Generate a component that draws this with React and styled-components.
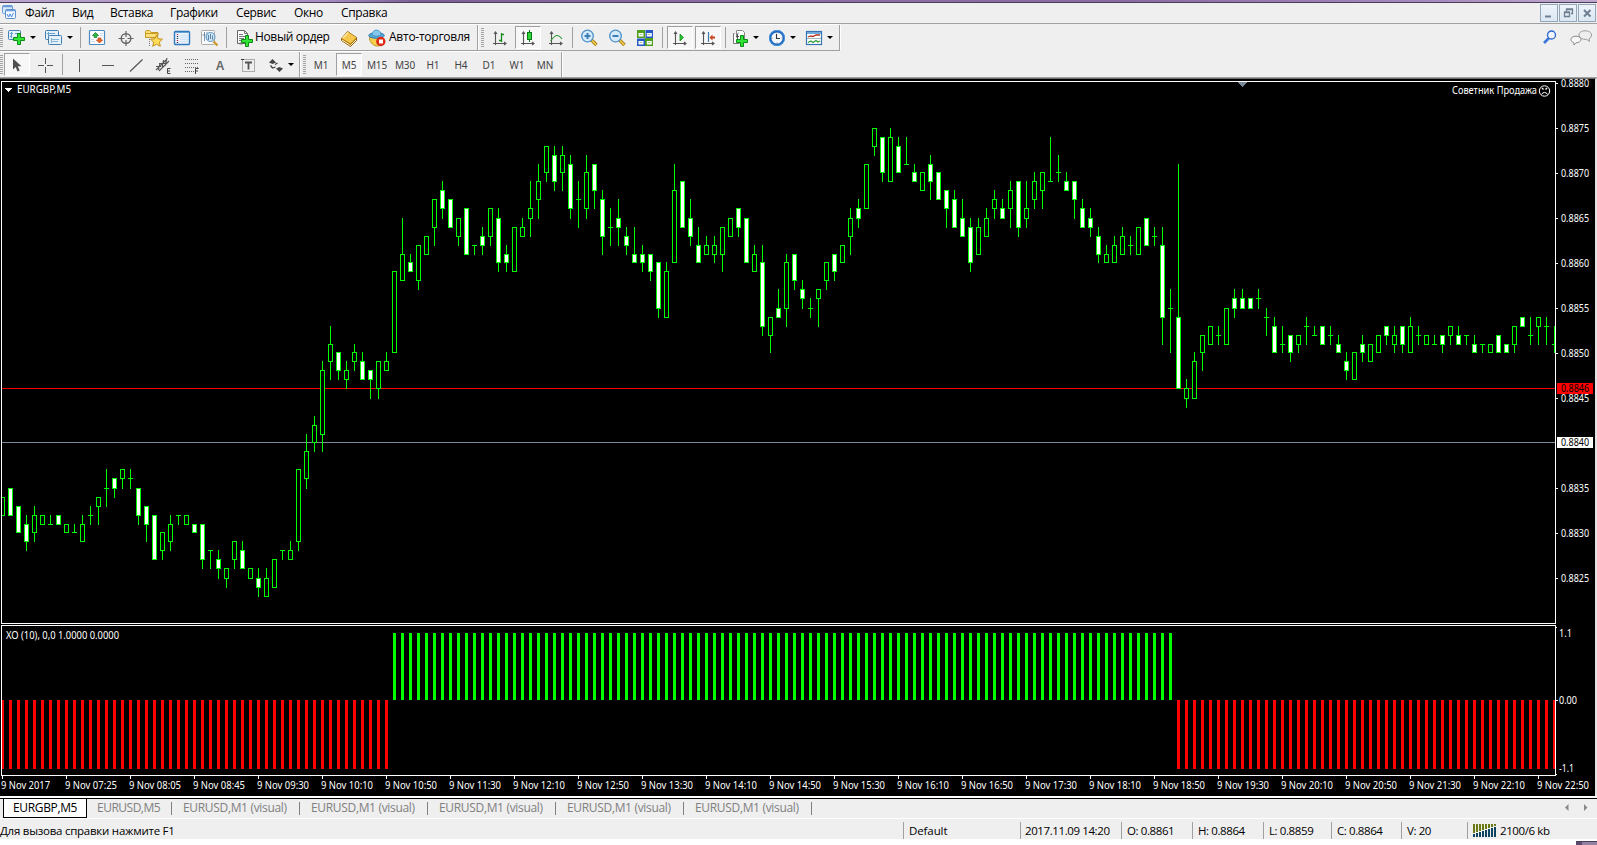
import styled, { createGlobalStyle } from 'styled-components'

const GlobalStyle = createGlobalStyle`
  body {
    margin: 0;
    background: #fff;
    overflow: hidden;
  }
`

const uiFont = "'Open Sans', 'Noto Sans', sans-serif"
const chartFont = "'Noto Sans', 'DejaVu Sans', sans-serif"

const AppStyled = styled.div`
  position: relative;
  width: 1597px;
  height: 845px;
  display: flex;
  flex-direction: column;
  overflow: hidden;
  background: #fff;
  font-family: ${uiFont};
  font-size: 12px;
  color: #000;
`

const TitleStrip = styled.div`
  height: 2px;
  flex: none;
  background: linear-gradient(90deg, #b9a5cc, #a98fc0 20%, #7d6093 26%, #8d6fa5 50%, #8a6ba0 70%, #a78bbd 90%, #c0a9cf);
  border-bottom: 1px solid #4a3d5c;
`

const MenuBar = styled.div`
  display: flex;
  align-items: center;
  height: 20px;
  flex: none;
  background: #efefef;
  border-bottom: 1px solid #a0a0a0;
`

const MenuIcon = styled.div`
  width: 25px;
  height: 20px;
  flex: none;
`

const MenuItem = styled.div`
  width: ${({ $w }) => $w}px;
  flex: none;
  line-height: 18px;
  white-space: nowrap;
  letter-spacing: ${({ $ls }) => $ls || 0}px;
`

const WindowButtons = styled.div`
  display: flex;
  gap: 1px;
  margin-left: auto;
  margin-right: 1px;
`

const WindowButton = styled.div`
  width: 16px;
  height: 16px;
  border: 1px solid #93a7bb;
  background: linear-gradient(#eef4fa, #dbe7f3);
  svg { display: block; }
`

const ToolArea = styled.div`
  display: flex;
  justify-content: space-between;
  height: 53px;
  flex: none;
  background: #efefef;
  border-bottom: 1px solid #a0a0a0;
`

const ToolRow = styled.div`
  display: flex;
  width: max-content;
  align-items: center;
  height: ${({ $h }) => $h}px;
  border-top: 1px solid #fff;
  border-bottom: ${({ $line }) => ($line ? '1px solid #a0a0a0' : '0')};
`

const ToolGroup = styled.div`
  display: flex;
  align-items: center;
  align-self: stretch;
  border-right: 1px solid #a0a0a0;
  box-shadow: 1px 0 0 #fff;
`

const Grip = styled.div`
  width: 3px;
  height: 20px;
  margin: 0 ${({ $r }) => $r}px 0 ${({ $l }) => $l}px;
  flex: none;
  background: repeating-linear-gradient(#a4a4a4 0 1px, #efefef 1px 2px);
`

const Divider = styled.div`
  width: ${({ $w }) => $w}px;
  height: 21px;
  flex: none;
  display: flex;
  justify-content: center;
  &::before {
    content: '';
    width: 1px;
    background: #a0a0a0;
  }
`

const Tool = styled.div`
  display: flex;
  align-items: center;
  justify-content: ${({ $left }) => ($left === undefined ? 'center' : 'flex-start')};
  width: ${({ $w }) => $w || 28}px;
  padding-left: ${({ $left }) => $left || 0}px;
  height: 22px;
  flex: none;
  box-sizing: border-box;
  white-space: nowrap;
  svg { flex: none; }
`

const Pressed = styled.div`
  width: 24px;
  height: 21px;
  display: flex;
  align-items: center;
  justify-content: center;
  border: 1px solid;
  border-color: #a0a0a0 #fff #fff #a0a0a0;
  margin: 0 1px;
  background: #f7f7f7;
`

const Caret = styled.i`
  width: 0;
  height: 0;
  margin-left: ${({ $gap = 4 }) => $gap}px;
  border: 3px solid transparent;
  border-top: 3px solid #000;
  border-bottom: 0;
`

const ToolLabel = styled.span`
  margin-left: ${({ $l = 1 }) => $l}px;
  margin-bottom: 2px;
  letter-spacing: ${({ $ls }) => $ls}px;
`

const Period = styled.span`
  font: 10px ${chartFont};
  color: #444;
  letter-spacing: -0.1px;
`

const Spacer = styled.div`
  width: ${({ $w }) => $w}px;
  flex: none;
`

const SideTools = styled.div`
  display: flex;
  gap: 13px;
  padding: 6px 4px 0 0;
`

const ChartWindow = styled.div`
  flex: none;
  width: 1595px;
  height: 717px;
  background: #000;
  border-top: 1px solid #6b6b6b;
  border-right: 2px solid #e3e3e3;
  svg {
    display: block;
    overflow: visible;
  }
`

const TabBar = styled.div`
  display: flex;
  height: 19px;
  flex: none;
  margin-top: 2px;
  border-top: 1px solid #000;
  background: #efefef;
  border-bottom: 1px solid #fff;
`

const Tab = styled.div`
  box-sizing: border-box;
  width: ${({ $w }) => $w}px;
  height: ${({ $active }) => ($active ? 19 : 16)}px;
  line-height: 18px;
  padding-left: ${({ $active, $pad = 11 }) => ($active ? 9 : $pad)}px;
  margin-left: ${({ $active }) => ($active ? 3 : 0)}px;
  white-space: nowrap;
  letter-spacing: ${({ $ls }) => $ls}px;
  color: ${({ $active }) => ($active ? '#000' : '#808080')};
  background: ${({ $active }) => ($active ? '#fff' : 'transparent')};
  ${({ $active }) => $active && 'border: solid #000; border-width: 0 1px 1px 1px;'}
`

const TabRule = styled.div`
  width: 1px;
  height: 13px;
  margin-top: 3px;
  background: #808080;
`

const TabArrows = styled.div`
  margin-left: auto;
  padding: 5px 9px 0 0;
  svg { display: block; }
`

const StatusBar = styled.div`
  display: flex;
  align-items: flex-end;
  height: 20px;
  flex: none;
  background: #efefef;
`

const StatusCell = styled.div`
  box-sizing: border-box;
  width: ${({ $w }) => $w}px;
  flex: none;
  height: 17px;
  line-height: 17px;
  display: flex;
  align-items: center;
  gap: 3px;
  padding-left: ${({ $pad = 4 }) => $pad}px;
  white-space: nowrap;
  font-size: 11.5px;
  letter-spacing: ${({ $ls = -0.4 }) => $ls}px;
  border-left: ${({ $first }) => ($first ? '0' : '1px solid #a0a0a0')};
`

const DesktopEdge = styled.div`
  align-self: flex-end;
  width: 21px;
  height: 4px;
  margin-top: 2px;
  background: linear-gradient(90deg, #5d4a6b 6px, #94819f 6px);
  border-top: 1px solid #4a3d5c;
  box-sizing: border-box;
`

/* ---------- icons ---------- */

const Svg = ({ children, w = 18, h = 18 }) => (
  <svg width={w} height={h} viewBox={`0 0 ${w} ${h}`} fill="none">{children}</svg>
)

const Plus = ({ x, y }) => (
  <path
    d={`M${x - 1.5} ${y - 5.5}h3v4h4v3h-4v4h-3v-4h-4v-3h4z`}
    fill="#2fe436" stroke="#0b8a16"
  />
)

const NewChartIcon = () => (
  <Svg>
    <rect x=".5" y="1.5" width="12" height="9" rx="1" fill="#e4f0fa" stroke="#4180b4" />
    <path d="M3.5 3v6M2 4.5h3M2 7.5h2M7 4.5h4" stroke="#5c9ccc" />
    <Plus x={11} y={10} />
  </Svg>
)

const ProfilesIcon = () => (
  <Svg>
    <rect x=".5" y="1.5" width="13" height="9" rx="1" fill="#e4f0fa" stroke="#4180b4" />
    <path d="M3.5 3v5M2 4.5h8" stroke="#6ba3cd" />
    <rect x="3.5" y="6.5" width="13" height="9" rx="1" fill="#e4f0fa" stroke="#4180b4" />
    <path d="M6 10.5h8M6 12.5h7M6.500 9v5" stroke="#85b6da" />
  </Svg>
)

const MarketIcon = () => (
  <Svg>
    <rect x="1.5" y="1.5" width="15" height="14" rx="1" fill="#fff" stroke="#4a8cc2" strokeWidth="1.2" />
    <path d="M3 12.5h4M3 10.5h3M12 4.5h3M12 6.5h3" stroke="#c9dcec" />
    <path d="M7.5 3.500l3 3h-1.700v2h-2.600v-2H4.5z" fill="#2fb944" stroke="#10862a" strokeWidth=".8" />
    <path d="M11.5 14l3-3h-1.700v-2h-2.600v2H8.5z" fill="#f0682a" stroke="#b93a0c" strokeWidth=".8" />
  </Svg>
)

const TargetIcon = () => (
  <Svg>
    <circle cx="9" cy="9.5" r="4.800" stroke="#666" strokeWidth="1.4" />
    <path d="M9 2v6M9 11v6M1.5 9.5h6M10.5 9.5h6" stroke="#666" strokeWidth="1.2" />
  </Svg>
)

const FavoritesIcon = () => (
  <Svg w={20}>
    <path d="M1.5 9V2.5q0-1 1-1h3l1.500 2h7v3" fill="#ffe07a" stroke="#c79a26" />
    <path d="M1.5 4.5h12v4h-12z" fill="#ffe07a" stroke="#c79a26" />
    <path d="M5.5 10v7" stroke="#777" strokeDasharray="1 1" />
    <path d="M12.5 6l1.800 3.800 4.200.4-3.100 2.900.9 4.200-3.800-2.100-3.800 2.100.9-4.200-3.100-2.900 4.200-.4z" fill="#ffdb58" stroke="#c0901c" />
  </Svg>
)

const DataIcon = () => (
  <Svg>
    <rect x="1.5" y="2.5" width="15" height="13" rx="1" fill="#eaf3fd" stroke="#2f78bd" strokeWidth="1.4" />
    <path d="M2 3.5h14" stroke="#66a5dc" />
    <path d="M4.5 5v1M4.5 11v1" stroke="#e22" strokeWidth="1.3" />
    <path d="M4.5 7v3M4.5 13v1" stroke="#223" strokeWidth="1.3" strokeDasharray="1 1" />
    <path d="M7 6.5h8M7 8.5h8M7 10.5h8M7 12.5h8" stroke="#cfe2f6" />
  </Svg>
)

const TesterIcon = () => (
  <Svg>
    <rect x=".5" y="1.5" width="13" height="14" rx="1" fill="#fafafa" stroke="#aaa" />
    <path d="M3.5 3v9M6 3v8M1.5 6h3" stroke="#5b7c9c" strokeWidth=".8" />
    <path d="M12.500 12.500l4 4" stroke="#c99a28" strokeWidth="2.4" />
    <circle cx="9.5" cy="8" r="4.5" fill="#c5e2f6" fillOpacity=".85" stroke="#5a93bf" />
    <path d="M7.5 6v5M9.5 5v5M11.5 6.500v4" stroke="#5d86a8" />
  </Svg>
)

const OrderIcon = () => (
  <Svg>
    <path d="M1.5 1.5h7l3 3v10h-10z" fill="#fff" stroke="#666" />
    <path d="M8.5 1.5v3h3M3 5.5h4M3 7.5h6M3 9.5h5M3 11.5h3" stroke="#777" />
    <path d="M3.5 13.5h3v2h-3z" fill="#777" />
    <Plus x={11} y={12} />
  </Svg>
)

const BookIcon = () => (
  <Svg>
    <path d="M1.5 9.5l6-7 9 6v3l-6 6-9-6z" fill="#b37a14" stroke="#96640e" />
    <path d="M1.8 9.2l5.800-6.500 8.700 5.900-5.800 6z" fill="#f6c74a" />
    <path d="M3 9l5-5.500" stroke="#ffe9a5" strokeWidth="1.5" />
    <path d="M2 11l8.500 5.500 5.500-5.500" stroke="#fff2c4" />
  </Svg>
)

const RobotIcon = () => (
  <Svg>
    <path d="M2 8l-.5 2c1 4 4 7 8 7s6-3 6-7l-2-3z" fill="#f5cf4e" stroke="#c1931f" />
    <ellipse cx="8.5" cy="6.5" rx="7.8" ry="2.8" fill="#58a9d8" stroke="#2b7bb0" />
    <path d="M4 6c0-3 2-5 4.500-5S13 3 13 6c-2 1.500-7 1.500-9 0z" fill="#86c8ec" stroke="#3a8dc0" strokeWidth=".8" />
    <circle cx="12.8" cy="12.5" r="4.700" fill="#dd2a14" />
    <rect x="11" y="10.500" width="4" height="4" fill="#fff" />
  </Svg>
)

const Axes = () => (
  <path d="M4.5 3v13M2 14.5h13M3 5l1.500-2L6 5M13 13l2 1.500-2 1.500" stroke="#555" strokeWidth="1.1" />
)

const BarsIcon = () => (
  <Svg><Axes /><path d="M10.5 4v9M10.5 5.5h2.500M8 11.5h2.500" stroke="#178a1e" strokeWidth="1.3" /></Svg>
)

const CandleIcon = () => (
  <Svg><Axes /><path d="M10.5 1v12" stroke="#0b7a14" /><rect x="8.5" y="3.5" width="4" height="7" fill="#2bd636" stroke="#0b7a14" /></Svg>
)

const LineIcon = () => (
  <Svg><Axes /><path d="M3.5 12c3-4 5-6 7-5.500s3.500 2 4.500 3.500" stroke="#2f9a36" strokeWidth="1.1" /></Svg>
)

const ZoomIcon = ({ plus }) => (
  <Svg>
    <path d="M11.5 11l5 5" stroke="#a97d15" strokeWidth="3.4" />
    <path d="M11.8 11.3l4.400 4.400" stroke="#f2cf55" strokeWidth="1.6" />
    <circle cx="7.5" cy="7" r="5.8" fill="#d5ebfa" stroke="#4a90c8" strokeWidth="1.3" />
    <path d={plus ? 'M4.5 7h6M7.5 4v6' : 'M4.5 7h6'} stroke="#3b7fb5" strokeWidth="2" />
  </Svg>
)

const TileIcon = () => (
  <Svg>
    <path d="M1 1h8v8H1zM9 9h8v8H9z" fill="#4f9f1c" />
    <path d="M9.5 1H17v8H9.5zM1 9.5h8V17H1z" fill="#2458c4" />
    <path d="M2.5 4h5v3.500h-5zM10.8 4h5v3.500h-5zM2.5 12h5v3.500h-5zM10.8 12h5v3.500h-5z" fill="#fff" />
    <path d="M3.5 5.5h3M11.5 5.5h3M3.5 13.5h3M11.5 13.5h3" stroke="#a8c8a0" />
  </Svg>
)

const ScrollIcon = () => (
  <Svg><Axes /><path d="M9 5l3.500 3.500L9 12z" fill="#2fc93a" stroke="#0f8a1a" strokeWidth=".8" /></Svg>
)

const ShiftIcon = () => (
  <Svg>
    <Axes />
    <path d="M9.5 3v10" stroke="#3b7cab" strokeWidth="1.2" />
    <path d="M10.5 8.500l3-3v2h2.500v2h-2.500v2z" fill="#c8451c" />
  </Svg>
)

const IndicatorIcon = () => (
  <Svg>
    <path d="M5.5 1.5h6l2 2v8h-8z" fill="#fff" stroke="#888" />
    <path d="M3.5 4.5h-1v10h6" fill="#fff" stroke="#777" />
    <path d="M7.5 4q-1 0-1 2v5M5 7.5h3" stroke="#555" />
    <Plus x={11} y={12} />
  </Svg>
)

const ClockIcon = () => (
  <Svg>
    <circle cx="9" cy="9" r="6.8" fill="#f4f8fc" stroke="#1f69be" strokeWidth="2.4" />
    <circle cx="9" cy="9" r="7.6" stroke="#4b9ce6" strokeWidth=".8" />
    <path d="M8.5 5v4.500H12" stroke="#333" strokeWidth="1.1" />
    <path d="M9 3.5v1M9 13.5v1M3.5 9h1M13.5 9h1" stroke="#888" />
  </Svg>
)

const TemplateIcon = () => (
  <Svg>
    <rect x="1.5" y="2.5" width="15" height="13" fill="#fff" stroke="#3573b4" strokeWidth="1.2" />
    <path d="M2 3.5h14M2 4.5h14" stroke="#6fa8dd" />
    <path d="M2 9.5h14" stroke="#9bb" />
    <path d="M3 8l3-1 2 .5 3-1.500h4" stroke="#b1301b" strokeWidth="1.3" />
    <path d="M3 13.5l3-1.500 2 1.500 3-2 2 1.500 2-1" stroke="#2f9a36" strokeWidth="1.3" />
  </Svg>
)

const CursorIcon = () => (
  <Svg><path d="M5 2.5v11l2.700-2.400 1.800 4.400 2.200-1-1.900-4.200h3.700z" fill="#505050" /></Svg>
)

const lineIcon = (d, width = 1) => () => (
  <Svg><path d={d} stroke="#555" strokeWidth={width} /></Svg>
)
const CrossIcon = lineIcon('M9.5 2v6M9.5 11v6M2 9.5h6M11 9.5h6')
const VerticalIcon = lineIcon('M8.5 3v13')
const HorizontalIcon = lineIcon('M3 9.5h12')
const TrendIcon = lineIcon('M3 15.5L15.5 3.5', 1.2)

const ChannelIcon = () => (
  <Svg>
    <path d="M1 14L11 4M4 15L14 5M1 10.5h5M4 7.5h8M3.5 14l1.500-7M7 12l1.500-8M10 10l2-8" stroke="#555" strokeWidth="1.1" />
    <path d="M15.5 12.5h-3v5h3M12.5 15h2.500" stroke="#444" />
  </Svg>
)

const FiboIcon = () => (
  <Svg>
    <path d="M2 3.5h14M2 7.5h14M2 11.5h14M2 15.5h9" stroke="#666" strokeDasharray="1 1" />
    <path d="M15.5 12.5h-3v5.500M12.5 15h2.500" stroke="#444" />
  </Svg>
)

const TextIcon = () => (
  <Svg><text x="9" y="14" textAnchor="middle" fontSize="12" fontWeight="700" fontFamily="Liberation Sans, sans-serif" fill="#666">A</text></Svg>
)

const LabelIcon = () => (
  <Svg>
    <rect x="3.5" y="3.5" width="12" height="12" stroke="#666" strokeDasharray="1 1" />
    <path d="M2 3.5h3" stroke="#333" />
    <path d="M6 6.5h7M9.5 6.5v7" stroke="#555" strokeWidth="1.8" />
  </Svg>
)

const ArrowsIcon = () => (
  <Svg>
    <path d="M2 6.500L5.500 3l3.500 3.500L5.500 8zM9 12.500l3.500-1.500 3.500 1.500-3.500 3.500z" fill="#444" />
    <path d="M8 8.500l2.500-1.500M3.500 9.500l2 2.500 3-1" stroke="#444" strokeWidth="1.3" />
  </Svg>
)

const AppIcon = () => (
  <Svg w={25} h={20}>
    <rect x="2.5" y="2.5" width="10" height="8" rx="1" fill="#d8e9fa" stroke="#6a9bd8" />
    <path d="M3 3.5h9" stroke="#6a9bd8" strokeWidth="1.5" />
    <rect x="5.5" y="6.5" width="10" height="9" rx="1" fill="#f2f8ff" stroke="#5b8fd0" />
    <path d="M6 7.5h9" stroke="#6a9bd8" strokeWidth="1.5" />
    <path d="M7 11l1.500 3 1.500-3 1.500 3 2-4" stroke="#3c7be0" strokeWidth=".9" />
  </Svg>
)

const SearchIcon = () => (
  <Svg w={14} h={15}>
    <path d="M1 13l5-5" stroke="#3b76da" strokeWidth="2.6" />
    <circle cx="8.5" cy="5" r="4" fill="#f3f7fd" stroke="#2a66cf" strokeWidth="1.3" />
  </Svg>
)

const ChatIcon = () => (
  <Svg w={23} h={16}>
    <path d="M9 5c0-2.500 2.500-4.200 6-4.200s6.500 1.700 6.500 4.200c0 1.800-1 3-2.500 3.800l.5 2.700-3-2.200c-4 .5-7.500-1.500-7.500-4.300z" fill="#eee" stroke="#9a9a9a" />
    <path d="M1 9.5C1 7.5 3 6.2 6 6.2s5 1.300 5 3.300-2.500 3.300-5 3.300L4 15l-.3-2.500C2 12 1 11 1 9.5z" fill="#f7f7f7" stroke="#8a8a8a" />
  </Svg>
)

/* ---------- toolbars ---------- */

const menu = [
  ['Файл', 47], ['Вид', 38], ['Вставка', 60], ['Графики', 66], ['Сервис', 58], ['Окно', 47], ['Справка', 60],
]

const Menu = () => (
  <MenuBar>
    <MenuIcon><AppIcon /></MenuIcon>
    {menu.map(([name, w]) => <MenuItem key={name} $w={w} $ls={-0.35}>{name}</MenuItem>)}
    <WindowButtons>
      <WindowButton><Svg w={16} h={16}><path d="M4 11.5h6" stroke="#6d7f90" strokeWidth="2" /></Svg></WindowButton>
      <WindowButton>
        <Svg w={16} h={16}>
          <path d="M6.5 6V4.5h6v4H11M6 4h7" stroke="#6d7f90" strokeWidth="1.3" />
          <path d="M4.5 7.5h5v4h-5zM4 7h6" stroke="#6d7f90" strokeWidth="1.3" />
        </Svg>
      </WindowButton>
      <WindowButton><Svg w={16} h={16}><path d="M5 5l6.500 6.500M11.5 5L5 11.5" stroke="#6d7f90" strokeWidth="2" /></Svg></WindowButton>
    </WindowButtons>
  </MenuBar>
)

const MainTools = () => (
  <ToolRow $h={25} $line>
    <ToolGroup>
      <Grip $l={0} $r={1} />
      <Tool $w={37} $left={4}><NewChartIcon /><Caret /></Tool>
      <Tool $w={37} $left={4}><ProfilesIcon /><Caret /></Tool>
      <Divider $w={5} />
      <Tool><MarketIcon /></Tool>
      <Tool $w={29}><TargetIcon /></Tool>
      <Tool><FavoritesIcon /></Tool>
      <Tool><DataIcon /></Tool>
      <Tool><TesterIcon /></Tool>
      <Divider $w={5} />
      <Tool $w={106} $left={7}><OrderIcon /><ToolLabel $ls={-0.35}>Новый ордер</ToolLabel></Tool>
      <Tool><BookIcon /></Tool>
      <Tool $w={114} $left={5}><RobotIcon /><ToolLabel $l={3} $ls={-0.25}>Авто-торговля</ToolLabel></Tool>
    </ToolGroup>
    <ToolGroup>
      <Grip $l={3} $r={2} />
      <Tool><BarsIcon /></Tool>
      <Tool><Pressed><CandleIcon /></Pressed></Tool>
      <Tool><LineIcon /></Tool>
      <Divider $w={5} />
      <Tool><ZoomIcon plus /></Tool>
      <Tool><ZoomIcon /></Tool>
      <Tool><TileIcon /></Tool>
      <Divider $w={7} />
      <Tool><Pressed><ScrollIcon /></Pressed></Tool>
      <Tool><Pressed><ShiftIcon /></Pressed></Tool>
      <Divider $w={6} />
      <Tool $w={37} $left={3}><IndicatorIcon /><Caret /></Tool>
      <Tool $w={37} $left={3}><ClockIcon /><Caret /></Tool>
      <Tool $w={37} $left={3}><TemplateIcon /><Caret /></Tool>
    </ToolGroup>
  </ToolRow>
)

const periods = ['M1', 'M5', 'M15', 'M30', 'H1', 'H4', 'D1', 'W1', 'MN']

const LineTools = () => (
  <ToolRow $h={25}>
    <ToolGroup>
      <Grip $l={0} $r={0} />
      <Tool><Pressed><CursorIcon /></Pressed></Tool>
      <Tool><CrossIcon /></Tool>
      <Divider $w={7} />
      <Tool><VerticalIcon /></Tool>
      <Tool><HorizontalIcon /></Tool>
      <Tool><TrendIcon /></Tool>
      <Tool><ChannelIcon /></Tool>
      <Tool><FiboIcon /></Tool>
      <Tool><TextIcon /></Tool>
      <Tool><LabelIcon /></Tool>
      <Tool $w={37} $left={5}><ArrowsIcon /><Caret $gap={3} /></Tool>
    </ToolGroup>
    <ToolGroup>
      <Grip $l={3} $r={1} />
      {periods.map((p) => (
        <Tool key={p}>
          {p === 'M5' ? <Pressed><Period>{p}</Period></Pressed> : <Period>{p}</Period>}
        </Tool>
      ))}
      <Spacer $w={2} />
    </ToolGroup>
  </ToolRow>
)

/* ---------- chart ---------- */

// Each candle: high, body top, body bottom, low, in points below 0.8880; "f" marks a falling candle.
const candles = `
46 46 48 48|45 45 48 48 f|47 47 50 50 f|48 49 51 52 f|47 48 50 51|48 48 49 49|48 49 49 49|48 48 49 49 f|49 49 50 50|49 50 50 50
48 49 51 51|47 48 48 49|46 46 47 49|43 45 45 47|44 44 45 46 f|43 43 44 45|43 44 44 45|45 45 48 49 f|47 47 49 51 f|48 48 53 53 f
50 50 52 53|48 49 51 52|48 48 48 49|48 48 49 49|49 49 50 50 f|49 49 53 54 f|52 52 52 54|52 53 54 55 f|54 54 55 56|51 51 53 54
51 52 54 54 f|54 54 55 55|54 55 56 57 f|54 55 57 57|53 53 56 56|52 52 52 53|51 52 53 53|43 43 51 52|39 41 44 45|37 38 40 41
31 32 39 41|27 29 31 33|30 30 32 33 f|31 32 33 34|29 30 31 32|30 31 33 33 f|32 32 33 35 f|31 31 34 35|30 31 32 32|21 21 30 30
15 19 22 22|19 20 21 21 f|18 18 22 23|17 17 19 19|13 13 16 18|11 12 14 15 f|13 13 16 16 f|15 15 17 18|14 14 19 19 f|18 18 18 19
16 17 18 19 f|14 14 17 18|14 15 20 21 f|18 19 20 21 f|16 16 21 21|15 16 17 17|11 14 15 17|9 11 13 15|7 7 10 11|7 8 11 12 f
7 8 10 12|8 9 14 15 f|11 13 13 16|8 10 14 15|9 9 12 14 f|12 13 17 19 f|14 16 16 18|13 15 16 18 f|16 17 18 19 f|16 19 20 20 f
18 19 20 21 f|19 19 21 22 f|20 20 25 26 f|20 21 26 26|9 12 20 20|11 11 16 16 f|13 15 17 18 f|16 18 20 20 f|17 18 19 19|17 18 19 20
16 16 19 21|15 15 17 17|14 14 16 17 f|15 15 20 20 f|18 19 21 21|18 20 27 28 f|26 26 28 30|23 25 26 26 f|19 20 25 27|19 19 22 23 f
22 23 24 25 f|24 25 25 26|23 23 24 27|20 20 22 23|19 19 21 22 f|18 18 20 20|14 15 17 19|13 14 15 16 f|9 9 14 14|5 5 7 8
6 6 10 11 f|5 6 11 11|6 7 10 10 f|6 9 9 9|9 10 11 11 f|10 10 12 12|8 9 11 13 f|10 10 13 13 f|12 12 14 16 f|12 13 16 16 f
13 15 17 17 f|15 16 20 21 f|15 16 19 19|14 15 17 17|12 13 14 15|13 14 15 15 f|11 12 14 16|11 11 16 17 f|11 14 15 16|10 11 13 14
10 10 12 14|6 11 11 11|8 10 10 11|10 11 12 12 f|11 11 13 15 f|13 14 16 16 f|14 15 16 17 f|16 17 19 20 f|18 19 20 20|17 18 20 20
16 17 19 19|17 18 18 19|16 16 19 19|15 15 18 18 f|16 17 17 18|16 18 26 29 f|23 25 25 30|9 26 34 34 f|33 34 35 36|30 31 35 35
28 28 30 32|27 27 29 29|27 28 28 29|25 25 29 29|23 24 25 26 f|23 24 25 25 f|24 24 25 25 f|23 24 24 25|25 26 26 28|26 27 30 30 f
27 29 29 30|28 28 30 31 f|28 28 29 30|26 27 27 29|27 28 28 28|27 27 29 29 f|27 28 28 29|28 29 30 30 f|30 31 32 33 f|30 30 33 33
28 29 30 31 f|29 29 31 31|28 28 30 30|27 27 28 29 f|27 28 29 30|27 27 29 30 f|26 27 30 30|27 28 28 29|28 28 29 29|28 29 29 29
28 28 29 30 f|27 27 28 29|27 28 29 29 f|28 28 28 29|28 29 30 30 f|29 29 29 30|29 29 30 30|28 28 30 30 f|29 29 30 30 f|27 27 29 30
26 26 27 27 f|26 28 28 29|26 26 27 29|26 27 27 29|27 29 29 30
`.trim().split(/[|\n]/).map((row) => {
  const [high, top, bottom, low, fall] = row.split(' ')
  return { high: +high, top: +top, bottom: +bottom, low: +low, falling: fall === 'f' }
})

const priceY = (n) => 3 + 9 * n + (n % 10 >= 5 ? 1 : 0)

const Candle = ({ x, high, top, bottom, low, falling }) => {
  const yTop = priceY(top)
  const yBottom = priceY(bottom)
  return (
    <g>
      <rect x={x} y={priceY(high)} width="1" height={priceY(low) - priceY(high) + 1} fill="#0f0" />
      <rect x={x - 2} y={yTop} width="5" height={yBottom - yTop + 1} fill="#0f0" />
      {yBottom > yTop && (
        <rect x={x - 1} y={yTop + 1} width="3" height={yBottom - yTop - 1} fill={falling ? '#fff' : '#000'} />
      )}
    </g>
  )
}

const ChartText = ({ x, y, w, color = '#fff', children }) => (
  <text x={x} y={y} textLength={w} lengthAdjust="spacingAndGlyphs" fill={color} fontSize="10" fontFamily={chartFont}>
    {children}
  </text>
)

const levels = [80, 75, 70, 65, 60, 55, 50, 45, 35, 30, 25]

const PriceChart = () => (
  <svg width="1595" height="545" shapeRendering="crispEdges">
    <clipPath id="price"><rect x="2" y="3" width="1553" height="541" /></clipPath>
    <rect x="1.5" y="2.5" width="1554" height="542" stroke="#fff" fill="none" />
    <rect x="2" y="309" width="1553" height="1" fill="#f00" />
    <rect x="2" y="363" width="1553" height="1" fill="#778899" />
    <g clipPath="url(#price)">
      {candles.map((c, i) => <Candle key={i} x={2 + 8 * i} {...c} />)}
    </g>
    <path d="M1238 3h9l-4.500 5z" fill="#778899" />
    {levels.map((l) => {
      const y = 4 + 9 * (80 - l)
      return (
        <g key={l}>
          <rect x="1556" y={y} width="2" height="1" fill="#fff" />
          <ChartText x={1561} y={y + 4} w={28}>{`0.88${l}`}</ChartText>
        </g>
      )
    })}
    <rect x="1557" y="304" width="36" height="11" fill="#f00" />
    <ChartText x={1561} y={313} w={28} color="#000">0.8846</ChartText>
    <rect x="1557" y="358" width="36" height="11" fill="#fff" />
    <ChartText x={1561} y={367} w={28} color="#000">0.8840</ChartText>
    <path d="M5 9h7l-3.500 4z" fill="#fff" />
    <ChartText x={17} y={14} w={54}>EURGBP,M5</ChartText>
    <ChartText x={1452} y={15} w={85}>Советник Продажа</ChartText>
    <g shapeRendering="auto" stroke="#fff" fill="none">
      <circle cx="1544.5" cy="12" r="5.2" />
      <path d="M1541.5 15.2q3-3.500 6 0" />
      <path d="M1542 9l1.500 1.500M1547 9l-1.500 1.500" strokeWidth="1.3" />
    </g>
  </svg>
)

const times = [
  '2017', '07:25', '08:05', '08:45', '09:30', '10:10', '10:50', '11:30', '12:10', '12:50', '13:30', '14:10', '14:50',
  '15:30', '16:10', '16:50', '17:30', '18:10', '18:50', '19:30', '20:10', '20:50', '21:30', '22:10', '22:50',
]

const IndicatorChart = () => (
  <svg width="1595" height="171" shapeRendering="crispEdges">
    <clipPath id="xo"><rect x="2" y="2" width="1553" height="149" /></clipPath>
    <rect x="1.5" y="1.5" width="1554" height="150" stroke="#fff" fill="none" />
    <g clipPath="url(#xo)">
      {candles.map((_, i) => {
        const up = i > 48 && i < 147
        return <rect key={i} x={1 + 8 * i} y={up ? 9 : 76} width="3" height={up ? 67 : 69} fill={up ? '#0f0' : '#f00'} />
      })}
    </g>
    <ChartText x={6} y={14.5} w={113}>XO (10), 0,0 1.0000 0.0000</ChartText>
    <path d="M1556 3.5h1M1556 76.5h2M1556 150.5h1" stroke="#fff" />
    <ChartText x={1559} y={12.5} w={13}>1.1</ChartText>
    <ChartText x={1559} y={80} w={18}>0.00</ChartText>
    <ChartText x={1559} y={148} w={15}>-1.1</ChartText>
    {times.map((t, k) => (
      <g key={t}>
        <rect x={2 + 64 * k} y="152" width="1" height="3" fill="#fff" />
        <ChartText x={1 + 64 * k} y={164.5} w={k ? 52 : 49}>{`9 Nov ${t}`}</ChartText>
      </g>
    ))}
  </svg>
)

/* ---------- bottom bars ---------- */

const Tabs = () => (
  <TabBar>
    <Tab $active $w={84} $ls={-0.35}>EURGBP,M5</Tab>
    <Tab $w={84} $pad={10} $ls={-0.5}>EURUSD,M5</Tab>
    <TabRule />
    {[1, 2, 3, 4, 5].map((n) => [
      <Tab key={n} $w={127} $ls={-0.33}>EURUSD,M1 (visual)</Tab>,
      <TabRule key={`rule${n}`} />,
    ])}
    <TabArrows>
      <Svg w={24} h={7}><path d="M4.5 0v7L1 3.5zM20 0v7l3.500-3.500z" fill="#8a8a8a" /></Svg>
    </TabArrows>
  </TabBar>
)

const bars = [0, 1, 2, 3, 4, 5, 6, 7]

const TrafficIcon = () => (
  <Svg w={24} h={14}>
    {bars.map((n) => (
      <g key={n}>
        <rect x={n * 3} y="0" width="2" height={9 - n} fill="#6b7a12" />
        <rect x={n * 3} y={10 - n} width="2" height={3 + n} fill="#0e4460" />
      </g>
    ))}
  </Svg>
)

const Status = () => (
  <StatusBar>
    <StatusCell $first $w={903} $pad={0} $ls={-0.25}>Для вызова справки нажмите F1</StatusCell>
    <StatusCell $w={117} $pad={5} $ls={-0.1}>Default</StatusCell>
    <StatusCell $w={101}>2017.11.09 14:20</StatusCell>
    <StatusCell $w={71} $pad={5}>O: 0.8861</StatusCell>
    <StatusCell $w={71} $pad={5}>H: 0.8864</StatusCell>
    <StatusCell $w={68} $pad={5}>L: 0.8859</StatusCell>
    <StatusCell $w={70} $pad={5}>C: 0.8864</StatusCell>
    <StatusCell $w={66} $pad={5}>V: 20</StatusCell>
    <StatusCell $w={130} $pad={5}><TrafficIcon />2100/6 kb</StatusCell>
  </StatusBar>
)

const App = () => (
  <AppStyled>
    <GlobalStyle />
    <TitleStrip />
    <Menu />
    <ToolArea>
      <div>
        <MainTools />
        <LineTools />
      </div>
      <SideTools>
        <SearchIcon />
        <ChatIcon />
      </SideTools>
    </ToolArea>
    <ChartWindow>
      <PriceChart />
      <IndicatorChart />
    </ChartWindow>
    <Tabs />
    <Status />
    <DesktopEdge />
  </AppStyled>
)

export default App
